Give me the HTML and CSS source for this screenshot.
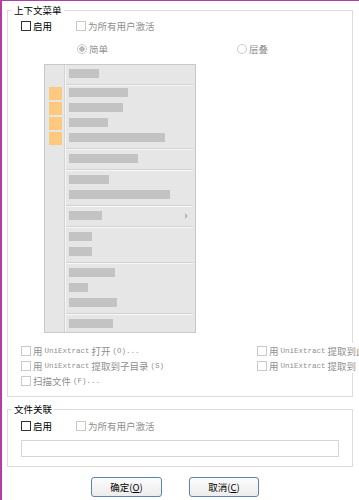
FILE: index.html
```html
<!DOCTYPE html>
<html>
	<head>
		<meta charset="utf-8">
		<title>UniExtract 设置</title>
		<link rel="stylesheet" href="styles.css">
	</head>
	<body>
		<fieldset class="grp">
			<legend>上下文菜单</legend>
			<div class="line first">
				<label class="chk on"><span class="box"></span>启用</label>
				<label class="chk off"><span class="box"></span>为所有用户激活</label>
			</div>
			<div class="line radios">
				<label class="rdo"><span class="dot checked"></span>简单</label>
				<label class="rdo"><span class="dot"></span>层叠</label>
			</div>
			<div class="menu">
				<div class="mi"><span class="bar" style="width:30px"></span></div>
				<div class="sep first"></div>
				<div class="mi ico"><span class="ic"></span><span class="bar" style="width:59px"></span></div>
				<div class="mi ico"><span class="ic"></span><span class="bar" style="width:54px"></span></div>
				<div class="mi ico"><span class="ic"></span><span class="bar" style="width:39px"></span></div>
				<div class="mi ico"><span class="ic"></span><span class="bar" style="width:96px"></span></div>
				<div class="sep"></div>
				<div class="mi"><span class="bar" style="width:69px"></span></div>
				<div class="sep"></div>
				<div class="mi"><span class="bar" style="width:40px"></span></div>
				<div class="mi"><span class="bar" style="width:101px"></span></div>
				<div class="sep"></div>
				<div class="mi"><span class="bar" style="width:33px"></span><span class="arr"></span></div>
				<div class="sep"></div>
				<div class="mi"><span class="bar" style="width:23px"></span></div>
				<div class="mi"><span class="bar" style="width:23px"></span></div>
				<div class="sep"></div>
				<div class="mi"><span class="bar" style="width:46px"></span></div>
				<div class="mi"><span class="bar" style="width:19px"></span></div>
				<div class="mi"><span class="bar" style="width:48px"></span></div>
				<div class="sep"></div>
				<div class="mi"><span class="bar" style="width:44px"></span></div>
			</div>
			<div class="opts">
				<label class="chk off"><span class="box"></span>用 <span class="en">UniExtract</span> 打开<span class="en">(O)...</span></label>
				<label class="chk off right"><span class="box"></span>用 <span class="en">UniExtract</span> 提取到此处<span class="en">(X)</span></label>
				<label class="chk off"><span class="box"></span>用 <span class="en">UniExtract</span> 提取到子目录<span class="en">(S)</span></label>
				<label class="chk off right"><span class="box"></span>用 <span class="en">UniExtract</span> 提取到<span class="en">(T)...</span></label>
				<label class="chk off"><span class="box"></span>扫描文件<span class="en">(F)...</span></label>
			</div>
		</fieldset>
		<fieldset class="grp second">
			<legend>文件关联</legend>
			<div class="line first">
				<label class="chk on"><span class="box"></span>启用</label>
				<label class="chk off"><span class="box"></span>为所有用户激活</label>
			</div>
			<input class="path" type="text" disabled>
		</fieldset>
		<div class="btns">
			<button class="btn">确定(<u>O</u>)</button>
			<button class="btn">取消(<u>C</u>)</button>
		</div>
	</body>
</html>
```

FILE: styles.css
```css
*{margin: 0;padding: 0;box-sizing: content-box;}
html{overflow: hidden;}
body{
	height: 499px;
	border-left: 2px solid #b13ea8;
	border-top: 1px solid #b13ea8;
	background: #fff;
	font-family: "Noto Sans CJK SC", sans-serif;
	font-size: 9.5px;
	line-height: 14px;
	color: #000;
	overflow: hidden;
}
.grp{
	margin: 2px 6px 0 5px;
	padding: 0 0 8px;
	border: 1px solid #dcdcdc;
	min-width: 0;
}
.grp legend{margin-left: 4px;padding: 0 2px;line-height: 14px;}
.grp.second{margin-top: 5px;padding-bottom: 9px;}
.line{display: flex;height: 14px;padding-left: 13px;}
.line.first{margin-top: 2px;}
.second .line.first{margin-top: 3px;}
.line.radios{margin-top: 9px;padding-left: 69px;}

.chk,.rdo{display: inline-flex;align-items: center;gap: 2px;white-space: nowrap;}
.line .chk.on{width: 55px;}
.chk .box{width: 8px;height: 8px;border: 1px solid #333;background: #fff;}
.chk.off{color: #8f8f8f;}
.chk.off .box{border-color: #c9c9c9;}
.rdo{color: #8f8f8f;}
.rdo:first-child{width: 160px;}
.rdo .dot{width: 8px;height: 8px;border: 1px solid #cbcbcb;border-radius: 50%;background: #fff;}
.rdo .dot.checked{background: radial-gradient(circle, #bcbcbc 2.5px, #fff 3px);}

.menu{
	width: 150px;
	margin: 8px 0 0 36px;
	padding: 1px 0;
	border: 1px solid #c9c9c9;
	background: linear-gradient(90deg, transparent 19px, #d3d3d3 19px, #d3d3d3 20px, #f6f6f6 20px, #f6f6f6 21px, transparent 21px), #e6e6e6;
}
.menu .mi{display: flex;align-items: center;height: 15px;padding-left: 24px;}
.menu .mi.ico{padding-left: 4px;}
.menu .ic{width: 13px;height: 13px;margin-right: 7px;align-self: flex-start;margin-top: 2px;background: #fcc97e;}
.menu .bar{height: 9px;background: #c3c3c3;}
.menu .arr{
	margin-left: auto;
	margin-right: 7px;
	border-left: 3px solid #b8b8b8;
	border-top: 3px solid transparent;
	border-bottom: 3px solid transparent;
}
.menu .sep{margin: 3px 2px 1px 21px;border-top: 1px solid #d2d2d2;border-bottom: 1px solid #f7f7f7;}
.menu .sep.first{margin-bottom: -1px;}

.opts{
	display: grid;
	grid-template-columns: 236px auto;
	grid-auto-rows: 15px;
	margin-top: 10px;
	padding-left: 13px;
}
.opts .chk{gap: 2px;}
.opts .right{background: #fff;}
.opts .en{font-family: "Liberation Mono", monospace;font-size: 7.5px;}

.path{
	display: block;
	box-sizing: border-box;
	width: 318px;
	height: 17px;
	margin: 7px 0 0 13px;
	border: 1px solid #d6d6d6;
	background: #fff;
}
.btns{display: flex;gap: 27px;margin-top: 10px;padding-left: 89px;}
.btn{
	width: 69px;
	height: 18px;
	border: 1px solid #5a84b6;
	border-radius: 3px;
	background: linear-gradient(#fcfcfc, #ececec);
	font-family: "Noto Sans CJK SC", sans-serif;
	font-size: 9.5px;
	line-height: 16px;
	color: #000;
}
.btn + .btn{width: 68px;}
```
